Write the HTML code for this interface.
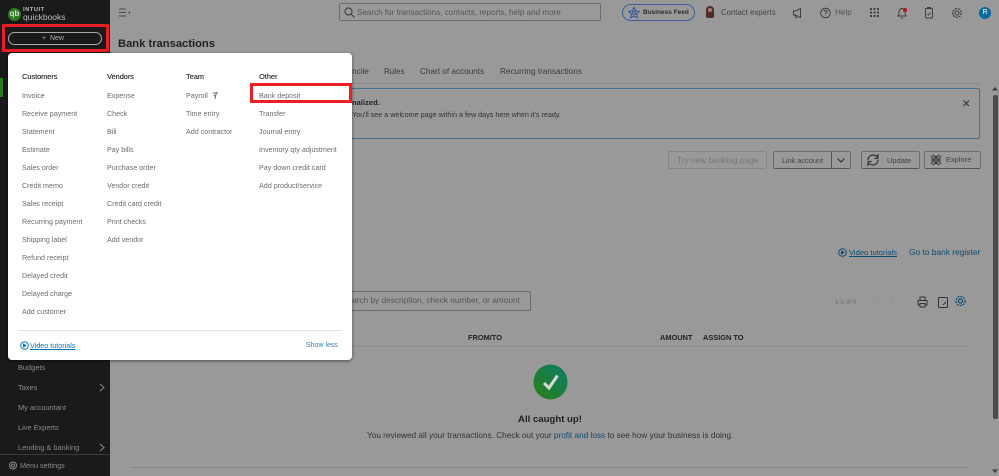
<!DOCTYPE html>
<html><head><meta charset="utf-8"><style>
html,body{margin:0;padding:0}
body{width:999px;height:476px;overflow:hidden;position:relative;background:#999;font-family:"Liberation Sans",sans-serif;color:#2b2b2b;filter:blur(.3px)}
.t{position:absolute;white-space:nowrap;line-height:10px;font-size:8px}
.m{color:#6b6c72;font-size:7.15px;margin-top:1px}
.h{color:#393a3d;font-size:7.3px;text-shadow:.25px 0 0 #393a3d}
.s{color:#8a8a8a;font-size:7.4px}
.b{position:absolute;box-sizing:border-box;border:1px solid #6e6e6e;border-bottom-color:#555;border-radius:2px}
svg{position:absolute;overflow:visible}
.r{position:absolute;box-sizing:border-box;border:3px solid #ee1c25}
</style></head><body>
<!-- main page -->
<div style="position:absolute;left:0;top:0;width:110px;height:476px;background:#1a1a1a"></div>
<div style="position:absolute;left:0;top:78px;width:3px;height:19px;background:#2c7a1e"></div>
<div style="position:absolute;left:0;top:454px;width:110px;height:1px;background:#3c3c3c"></div>
<div class="t s" style="left:18px;top:363px">Budgets</div>
<div class="t s" style="left:18px;top:383px">Taxes</div>
<div class="t s" style="left:18px;top:403px">My accountant</div>
<div class="t s" style="left:18px;top:423px">Live Experts</div>
<div class="t s" style="left:18px;top:443px">Lending &amp; banking</div>
<div class="t s" style="left:20px;top:461px;font-size:7.200px">Menu settings</div>
<svg style="left:0;top:0" width="110" height="476" fill="none" stroke="#8a8a8a"><path d="M100 384l4 3.500-4 3.500M100 444l4 3.500-4 3.500"/><circle cx="13" cy="465.500" r="3.500"/><circle cx="13" cy="465.500" r="1.500"/></svg>
<!-- logo -->
<div style="position:absolute;left:8px;top:8px;width:13px;height:13px;border-radius:50%;background:#2c7a1e;color:#ddd;font:bold 8px/12px 'Liberation Sans',sans-serif;text-align:center">qb</div>
<div class="t" style="left:23px;top:6px;color:#bbb;font-size:5.800px;font-weight:bold;letter-spacing:.5px;line-height:8px">INTUIT</div>
<div class="t" style="left:23px;top:12px;color:#bbb;font-size:8.500px;line-height:11px">quickbooks</div>
<div style="position:absolute;left:8px;top:32px;width:94px;height:13px;box-sizing:border-box;border:1px solid #aaa;border-radius:7px"></div>
<div class="t" style="left:42px;top:34px;color:#a9a9a9;font-size:7px;line-height:10px">+ &nbsp;New</div>
<!-- top bar -->
<svg style="left:119px;top:8px" width="12" height="10" stroke="#4c4c4c" fill="#4c4c4c"><path d="M0 1h7M0 4.500h7M0 8h7" fill="none"/><path d="M11 3v3l-2-1.500z" stroke="none"/></svg>
<div class="b" style="left:339px;top:3px;width:262px;height:18px;border-color:#6c6c6c"></div>
<svg style="left:344px;top:7px" width="11" height="11" fill="none" stroke="#444" stroke-width="1.200"><circle cx="4.500" cy="4.500" r="3.500"/><path d="M7 7l3.500 3.500"/></svg>
<div class="t" style="left:357px;top:8px;color:#555;font-size:8.100px">Search for transactions, contacts, reports, help and more</div>
<div style="position:absolute;left:622px;top:4px;width:73px;height:17px;box-sizing:border-box;border:1px solid #3e5f9e;border-radius:9px"></div>
<svg style="left:628px;top:7px" width="12" height="12" fill="none" stroke="#31569c"><path d="M6 .5l1.600 3.400 3.700.5-2.700 2.600.7 3.700L6 9l-3.300 1.700.7-3.700L.7 4.400l3.700-.5z"/><circle cx="6" cy="6" r="1.500"/></svg>
<div class="t" style="left:643px;top:8px;color:#2c2c2c;font-size:6.500px;font-weight:bold">Business Feed</div>
<div style="position:absolute;left:706px;top:6px;width:8px;height:12px;border-radius:4px 4px 2px 2px;background:#4d2e26"></div>
<div style="position:absolute;left:708px;top:8px;width:4px;height:4px;border-radius:50%;background:#a87f6e"></div>
<div class="t" style="left:721px;top:8px;color:#444;font-size:7.800px">Contact experts</div>
<svg style="left:792px;top:5.500px" width="170" height="14" fill="none" stroke="#3f3f3f"><path d="M1.500 5v4h2l5 2.500v-9l-5 2.500zM3.500 9.500v2h2"/><circle cx="33.500" cy="7" r="4.800"/><path d="M32 5.500c.3-1.600 3-1.400 3 .2 0 1-1.500 1.200-1.500 2.300M33.500 9.500v.5"/><g fill="#3f3f3f" stroke="none"><rect x="78" y="2" width="2" height="2"/><rect x="81.500" y="2" width="2" height="2"/><rect x="85" y="2" width="2" height="2"/><rect x="78" y="5.500" width="2" height="2"/><rect x="81.500" y="5.500" width="2" height="2"/><rect x="85" y="5.500" width="2" height="2"/><rect x="78" y="9" width="2" height="2"/><rect x="81.500" y="9" width="2" height="2"/><rect x="85" y="9" width="2" height="2"/></g><path d="M106 10c1-1 1-2 1-4 0-2 1.500-3.500 3-3.500s3 1.500 3 3.500c0 2 0 3 1 4zM109 12h2"/><rect x="133.500" y="2.500" width="7" height="9.500" rx="1"/><path d="M135.500 2.500v-1h3v1M135.500 8l1 1 2-2.500"/><circle cx="165" cy="7" r="2"/><circle cx="165" cy="7" r="4.300" stroke-dasharray="2 1" stroke-width="1.300"/></svg>
<div style="position:absolute;left:903px;top:8px;width:4px;height:4px;border-radius:50%;background:#b3131b"></div>
<div class="t" style="left:835px;top:8px;color:#555;font-size:8.200px">Help</div>
<div style="position:absolute;left:979px;top:6.500px;width:12px;height:12px;border-radius:50%;background:#0a6a9e;color:#ccc;font:bold 7px/12px 'Liberation Sans',sans-serif;text-align:center">R</div>
<!-- page title -->
<div class="t" style="left:118px;top:37px;font-size:11.200px;font-weight:bold;line-height:14px;color:#222">Bank transactions</div>
<!-- tabs -->
<div class="t" style="left:352px;top:67px;font-size:8.200px;color:#3a3a3a">ncile</div>
<div class="t" style="left:384px;top:67px;font-size:8px;color:#3a3a3a">Rules</div>
<div class="t" style="left:420px;top:67px;font-size:8.200px;color:#3a3a3a">Chart of accounts</div>
<div class="t" style="left:500px;top:67px;font-size:8.200px;color:#3a3a3a">Recurring transactions</div>
<div style="position:absolute;left:352px;top:83px;width:628px;height:1px;background:#8a8a8a"></div>
<!-- banner -->
<div style="position:absolute;left:352px;top:88px;width:628px;height:51px;box-sizing:border-box;border:1px solid #456f8c;border-left:0;border-radius:0 2px 2px 0"></div>
<div class="t" style="left:352px;top:98px;font-size:7.600px;font-weight:bold;color:#222">nalized.</div>
<div class="t" style="left:352px;top:110px;font-size:7.200px;color:#333">You'll see a welcome page within a few days here when it's ready.</div>
<svg style="left:963px;top:100px" width="6" height="6" stroke="#333"><path d="M.5.500l5.500 5.500M6 .500L.5 6"/></svg>
<!-- buttons -->
<div class="b" style="left:668px;top:151px;width:99px;height:18px;border-color:#858585"></div>
<div class="t" style="left:677px;top:155px;font-size:8.300px;color:#777">Try new banking page</div>
<div class="b" style="left:773px;top:151px;width:78px;height:18px"></div>
<div style="position:absolute;left:831px;top:151px;width:1px;height:18px;background:#555"></div>
<div class="t" style="left:782px;top:156px;font-size:7.300px;color:#444">Link account</div>
<svg style="left:837px;top:158px" width="9" height="5" fill="none" stroke="#333" stroke-width="1.200"><path d="M.5.500l3.500 3.500L7.500.500"/></svg>
<div class="b" style="left:861px;top:151px;width:59px;height:18px"></div>
<svg style="left:867px;top:154px" width="12" height="12" fill="none" stroke="#333" stroke-width="1.200"><path d="M1 6a5 5 0 0 1 8.500-3.500L11 1v3.500H7.500M11 6a5 5 0 0 1-8.500 3.500L1 11V7.500h3.500"/></svg>
<div class="t" style="left:887px;top:156px;font-size:7.500px;color:#444">Update</div>
<div class="b" style="left:924px;top:151px;width:57px;height:18px"></div>
<svg style="left:930px;top:154px" width="12" height="12" fill="none" stroke="#333"><ellipse cx="6" cy="6" rx="5.500" ry="2.500" transform="rotate(45 6 6)"/><ellipse cx="6" cy="6" rx="5.500" ry="2.500" transform="rotate(-45 6 6)"/><circle cx="6" cy="6" r="1"/></svg>
<div class="t" style="left:946px;top:155px;font-size:7.500px;color:#444">Explore</div>
<!-- scrollbar -->
<svg style="left:991px;top:86px" width="8" height="390" fill="#3f3f3f"><path d="M4 1l3 3.500H1z"/><path d="M4 387l3-3.500H1z"/><rect x="2" y="9" width="5" height="324" fill="#4a4a4a" rx="2"/></svg>
<!-- links -->
<svg style="left:838px;top:248px" width="9" height="9" fill="none" stroke="#0f4d72"><circle cx="4.500" cy="4.500" r="3.800"/><path d="M3.500 3v3l2.300-1.500z" fill="#0f4d72"/></svg>
<div class="t" style="left:849px;top:248px;font-size:7.600px;color:#0f4d72;text-decoration:underline">Video tutorials</div>
<div class="t" style="left:909px;top:247px;font-size:8.400px;color:#0f4d72">Go to bank register</div>
<!-- search -->
<div class="b" style="left:340px;top:291px;width:191px;height:20px;border-left:0;border-color:#6c6c6c"></div>
<div class="t" style="left:352px;top:295px;font-size:8.300px;color:#555">arch by description, check number, or amount</div>
<div class="t" style="left:835px;top:298px;font-size:6.200px;color:#6d6d6d">1-0 of 0</div>
<div class="t" style="left:873px;top:297px;font-size:8px;color:#858585">‹</div>
<div class="t" style="left:890px;top:297px;font-size:8px;color:#858585">›</div>
<svg style="left:917px;top:296px" width="11" height="12" fill="none" stroke="#333"><path d="M3 4V1h5v3M3 9H1V4.500h9V9H8M3 7.500h5v3.500H3z"/></svg>
<svg style="left:938px;top:297px" width="10" height="11" fill="none" stroke="#333"><rect x=".5" y=".5" width="9" height="10" rx="1"/><path d="M5 8l3-3"/></svg>
<svg style="left:955px;top:295px" width="11" height="12" fill="none" stroke="#0f4d72" stroke-width="1.200"><circle cx="5.500" cy="6" r="2"/><circle cx="5.500" cy="6" r="4.500" stroke-dasharray="2 1"/></svg>
<!-- table -->
<div class="t" style="left:468px;top:333px;font-size:7.400px;font-weight:bold;color:#222">FROM/TO</div>
<div class="t" style="left:660px;top:333px;font-size:7.400px;font-weight:bold;color:#222">AMOUNT</div>
<div class="t" style="left:703px;top:333px;font-size:7.400px;font-weight:bold;color:#222">ASSIGN TO</div>
<div style="position:absolute;left:340px;top:346px;width:628px;height:1px;background:#8c8c8c"></div>
<svg style="left:533px;top:364px" width="35" height="36"><defs><linearGradient id="g" x1="1" y1="0" x2="0" y2="1"><stop offset="0" stop-color="#0d7c6a"/><stop offset="1" stop-color="#2a8016"/></linearGradient></defs><ellipse cx="17.500" cy="18" rx="17" ry="17.500" fill="url(#g)"/><path d="M11 19l5 5 8.500-12.500" fill="none" stroke="#d8d8d8" stroke-width="3"/></svg>
<div class="t" style="left:400px;top:414px;width:300px;text-align:center;font-size:9.600px;line-height:12px;font-weight:bold;color:#222">All caught up!</div>
<div class="t" style="left:367px;top:431px;font-size:8.240px;color:#333">You reviewed all your transactions. Check out your <span style="color:#0f4d72">profit and loss</span> to see how your business is doing.</div>
<div style="position:absolute;left:130px;top:467px;width:838px;height:1px;background:#858585"></div>
<!-- red box new -->
<div class="r" style="left:2px;top:24px;width:107px;height:28px"></div>
<!-- dropdown -->
<div style="position:absolute;left:8px;top:53px;width:344px;height:307px;background:#fff;border-radius:4px;box-shadow:0 1px 3px rgba(0,0,0,.5)"></div>
<div class="t h" style="left:22px;top:72px">Customers</div>
<div class="t m" style="left:22px;top:90px">Invoice</div>
<div class="t m" style="left:22px;top:108px">Receive payment</div>
<div class="t m" style="left:22px;top:126px">Statement</div>
<div class="t m" style="left:22px;top:144px">Estimate</div>
<div class="t m" style="left:22px;top:162px">Sales order</div>
<div class="t m" style="left:22px;top:180px">Credit memo</div>
<div class="t m" style="left:22px;top:198px">Sales receipt</div>
<div class="t m" style="left:22px;top:216px">Recurring payment</div>
<div class="t m" style="left:22px;top:234px">Shipping label</div>
<div class="t m" style="left:22px;top:252px">Refund receipt</div>
<div class="t m" style="left:22px;top:270px">Delayed credit</div>
<div class="t m" style="left:22px;top:288px">Delayed charge</div>
<div class="t m" style="left:22px;top:306px">Add customer</div>
<div class="t h" style="left:107px;top:72px">Vendors</div>
<div class="t m" style="left:107px;top:90px">Expense</div>
<div class="t m" style="left:107px;top:108px">Check</div>
<div class="t m" style="left:107px;top:126px">Bill</div>
<div class="t m" style="left:107px;top:144px">Pay bills</div>
<div class="t m" style="left:107px;top:162px">Purchase order</div>
<div class="t m" style="left:107px;top:180px">Vendor credit</div>
<div class="t m" style="left:107px;top:198px">Credit card credit</div>
<div class="t m" style="left:107px;top:216px">Print checks</div>
<div class="t m" style="left:107px;top:234px">Add vendor</div>
<div class="t h" style="left:186px;top:72px">Team</div>
<div class="t m" style="left:186px;top:90px">Payroll</div>
<svg style="left:212px;top:91px" width="7" height="9" fill="none" stroke="#6b6c72"><path d="M1 2h5M4.500 1L3 8M3 4l-1.500 1"/></svg>
<div class="t m" style="left:186px;top:108px">Time entry</div>
<div class="t m" style="left:186px;top:126px">Add contractor</div>
<div class="t h" style="left:259px;top:72px">Other</div>
<div class="t m" style="left:259px;top:90px">Bank deposit</div>
<div class="t m" style="left:259px;top:108px">Transfer</div>
<div class="t m" style="left:259px;top:126px">Journal entry</div>
<div class="t m" style="left:259px;top:144px">Inventory qty adjustment</div>
<div class="t m" style="left:259px;top:162px">Pay down credit card</div>
<div class="t m" style="left:259px;top:180px">Add product/service</div>
<div class="r" style="left:250px;top:83px;width:102px;height:20px"></div>
<div style="position:absolute;left:18px;top:330px;width:324px;height:1px;background:#e3e3e3"></div>
<svg style="left:20px;top:341px" width="9" height="9" fill="none" stroke="#0b75b8"><circle cx="4.500" cy="4.500" r="3.800"/><path d="M3.500 3v3l2.300-1.500z" fill="#0b75b8"/></svg>
<div class="t" style="left:30px;top:341px;font-size:7.200px;color:#0b75b8;text-decoration:underline">Video tutorials</div>
<div class="t" style="left:306px;top:341px;font-size:7px;color:#2a87c6">Show less</div>
</body></html>
